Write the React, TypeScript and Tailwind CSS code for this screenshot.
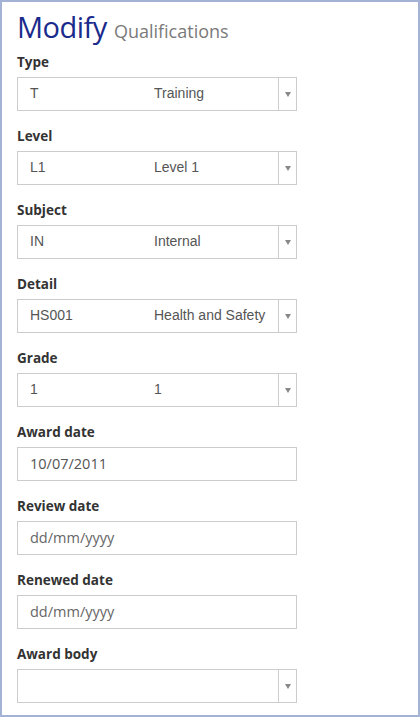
import React from "react";

type Field =
  | { label: string; kind: "select"; code: string; text: string }
  | { label: string; kind: "date"; value: string; placeholder?: boolean };

const fields: Field[] = [
  { label: "Type", kind: "select", code: "T", text: "Training" },
  { label: "Level", kind: "select", code: "L1", text: "Level 1" },
  { label: "Subject", kind: "select", code: "IN", text: "Internal" },
  { label: "Detail", kind: "select", code: "HS001", text: "Health and Safety" },
  { label: "Grade", kind: "select", code: "1", text: "1" },
  { label: "Award date", kind: "date", value: "10/07/2011" },
  { label: "Review date", kind: "date", value: "dd/mm/yyyy", placeholder: true },
  { label: "Renewed date", kind: "date", value: "dd/mm/yyyy", placeholder: true },
  { label: "Award body", kind: "select", code: "", text: "" },
];

function Arrow() {
  return (
    <svg width="6" height="5" viewBox="0 0 6 5">
      <polygon points="0,0 6,0 3,5" fill="#888" />
    </svg>
  );
}

export default function App() {
  return (
    <div className="w-[420px] h-[717px] border-2 border-[#a3b2d5] bg-white pl-[15px] overflow-hidden font-['Open_Sans',sans-serif]">
      <div className="flex items-baseline h-[51px] pt-[7px]">
        <span className="text-[29px] leading-[36px] text-[#1a2b8c] tracking-[-0.5px]">Modify</span>
        <span className="ml-[7px] text-[18px] text-[#7a7a7a]">Qualifications</span>
      </div>
      {fields.map((f) => (
        <div key={f.label} className="mb-[16px]">
          <div className="h-[18px] leading-[18px] text-[13.5px] font-bold text-[#333] mb-[6px]">{f.label}</div>
          {f.kind === "select" ? (
            <div className="flex w-[280px] h-[34px] border border-[#cccccc] bg-white">
              <div className="flex flex-1 items-center pl-[12px] pb-[1px] font-['Liberation_Sans',Arial,sans-serif] text-[14px] text-[#555]">
                <span className="w-[124px]">{f.code}</span>
                <span>{f.text}</span>
              </div>
              <div className="w-[18px] border-l border-[#cccccc] flex items-center justify-center">
                <Arrow />
              </div>
            </div>
          ) : (
            <div className="flex items-center w-[280px] h-[34px] border border-[#cccccc] bg-white pl-[12px] text-[14.5px] text-[#555]">
              <span className={f.placeholder ? "text-[#666]" : "text-[#555]"}>{f.value}</span>
            </div>
          )}
        </div>
      ))}
    </div>
  );
}
